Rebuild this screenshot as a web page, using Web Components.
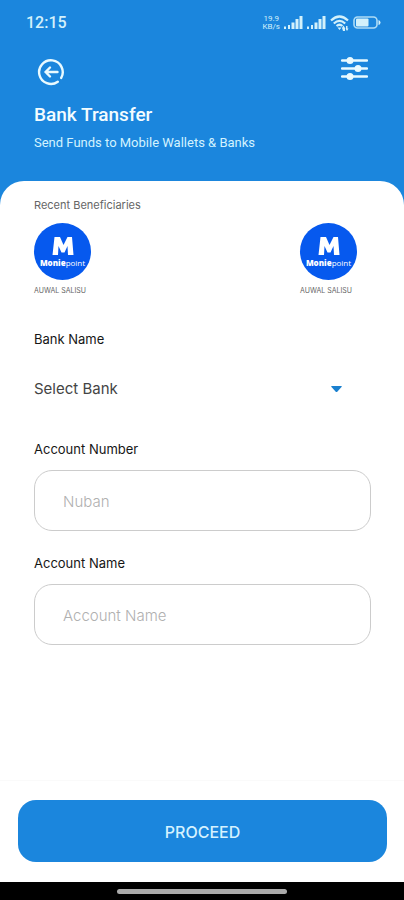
<!DOCTYPE html>
<html lang="en">
<head>
<meta charset="utf-8">
<meta name="viewport" content="width=device-width, initial-scale=1">
<title>Bank Transfer</title>
<style>
  html, body { margin: 0; height: 100%; }
  body { font-family: Inter, "Liberation Sans", sans-serif; background: #fff; }
</style>
</head>
<body>
<transfer-page>
  <status-bar slot="top" time="12:15"></status-bar>
  <page-header slot="top">
    <span slot="title">Bank Transfer</span>
    <span slot="subtitle">Send Funds to Mobile Wallets &amp; Banks</span>
  </page-header>
  <beneficiary-list>
    <span slot="heading">Recent Beneficiaries</span>
    <beneficiary-item>AUWAL SALISU</beneficiary-item>
    <beneficiary-item>AUWAL SALISU</beneficiary-item>
  </beneficiary-list>
  <bank-select label="Bank Name" placeholder="Select Bank"></bank-select>
  <text-field label="Account Number" placeholder="Nuban" mode="numeric"></text-field>
  <text-field label="Account Name" placeholder="Account Name" mode="text"></text-field>
  <action-bar slot="bottom">PROCEED</action-bar>
  <gesture-bar slot="bottom"></gesture-bar>
</transfer-page>

<script>
const define = (name, html, setup) => customElements.define(name, class extends HTMLElement {
  connectedCallback() {
    if (this.shadowRoot) return;
    this.attachShadow({ mode: 'open' }).innerHTML = html;
    if (setup) setup(this, this.shadowRoot);
  }
});

define('transfer-page', `
  <style>
    :host { display: flex; flex-direction: column; min-height: 100vh; background: #1b86dd; }
    main { flex: 1; box-sizing: border-box; background: #fff; border-radius: 24px 24px 0 0; padding: 16px 33px 24px 34px; }
  </style>
  <slot name="top"></slot>
  <main><slot></slot></main>
  <slot name="bottom"></slot>`);

define('status-bar', `
  <style>
    :host { display: flex; justify-content: space-between; align-items: center; height: 45px; padding: 0 23px 0 26px; color: #d3f1fb; font-family: Roboto, sans-serif; }
    .time { font-size: 16px; font-weight: 500; line-height: 20px; }
    .icons { display: flex; align-items: center; gap: 4px; }
    .rate { font-size: 8px; line-height: 8px; text-align: center; }
    svg { display: block; fill: currentColor; }
  </style>
  <span class="time"></span>
  <div class="icons">
    <div class="rate">19.9<br>KB/s</div>
    <svg width="19" height="13" viewBox="0 0 19 13"><path d="M0 10.500h2V13H0zM4 9h2v4H4zM7.500 6.500h3V13h-3zM11.500 3h3v10h-3zM15.500 0h3v13h-3z"/></svg>
    <svg width="19" height="13" viewBox="0 0 19 13"><path d="M0 10.500h2V13H0zM4 9h2v4H4zM7.500 6.500h3V13h-3zM11.500 3h3v10h-3zM15.500 0h3v13h-3z"/></svg>
    <svg width="19" height="16" viewBox="0 0 19 16"><g fill="none" stroke="currentColor" stroke-width="2.200"><path d="M1 5.500Q9.500-2.500 18 5.500"/><path d="M3.800 8.500Q9.500 3.200 15.200 8.500"/><path d="M6.500 11Q9.500 8.500 12.500 11"/></g><path d="M7.500 12.500 9.500 15l2-2.500zM12 13l1.500-2.500L15 13v3h-2zM16 11h1.500v2.500h1L17 16l-1.500-2.500h.500z"/></svg>
    <svg width="28" height="13" viewBox="0 0 28 13"><rect x="1" y="1" width="23" height="11" rx="3.500" fill="none" stroke="currentColor" stroke-width="1.600" opacity=".8"/><rect x="3" y="2.500" width="12.500" height="8" rx="1"/><path d="M25.500 4q2 .5 2 2.500t-2 2.500z"/></svg>
  </div>`,
  (host, root) => { root.querySelector('.time').textContent = host.getAttribute('time'); });

define('page-header', `
  <style>
    :host { display: block; padding: 11px 36px 29px 34px; color: #fff; font-family: Roboto, sans-serif; }
    nav { display: flex; justify-content: space-between; align-items: flex-start; }
    button { border: 0; padding: 0; background: none; color: #e9faff; cursor: pointer; }
    svg { display: block; }
    .back { padding: 2px 3px; }
    h1 { margin: 15px 0 0; font-size: 19px; line-height: 24px; font-weight: 500; color: #f3fcff; }
    p { margin: 7px 0 0; font-size: 13px; line-height: 18px; color: #d3f3ff; }
  </style>
  <nav>
    <button class="back" aria-label="Back"><svg width="28" height="28" viewBox="0 0 28 28" fill="none" stroke="currentColor" stroke-width="2.400" stroke-linecap="round" stroke-linejoin="round"><path d="M24.200 19.900A11.800 11.800 0 1 0 20.800 23.700"/><path d="M20.500 14H8.500m4.500-4.500L8.500 14l4.500 4.500"/></svg></button>
    <button aria-label="Filter"><svg width="27" height="26" viewBox="0 0 27 26" fill="currentColor"><path d="M1 4.500h25M1 12.500h25M1 20.500h25" stroke="currentColor" stroke-width="2.400" stroke-linecap="round"/><circle cx="9" cy="4.500" r="3.500"/><circle cx="17" cy="12.500" r="3.500"/><circle cx="9" cy="20.500" r="3.500"/></svg></button>
  </nav>
  <h1><slot name="title"></slot></h1>
  <p><slot name="subtitle"></slot></p>`);

define('beneficiary-list', `
  <style>
    :host { display: block; margin-bottom: 34px; }
    h2 { margin: 0 0 10px; font-size: 11px; line-height: 16px; font-weight: 400; color: #666; }
    .row { display: flex; justify-content: space-between; padding-right: 14px; }
  </style>
  <h2><slot name="heading"></slot></h2>
  <div class="row"><slot></slot></div>`);

define('beneficiary-item', `
  <style>
    :host { display: block; }
    button { display: flex; flex-direction: column; align-items: flex-start; gap: 6px; padding: 0; border: 0; background: none; cursor: pointer; font: 7px/10px Inter, sans-serif; color: #666; }
    .logo { display: flex; flex-direction: column; align-items: center; justify-content: center; box-sizing: border-box; width: 57px; height: 57px; padding-top: 2px; border-radius: 50%; background: #0659ee; color: #fff; }
    svg { display: block; }
    .brand { font: 800 8px/12px "Open Sans", sans-serif; margin-top: 2px; }
    .brand span { font-weight: 400; }
  </style>
  <button>
    <span class="logo">
      <svg width="22" height="18" viewBox="0 0 22 18" fill="currentColor" aria-hidden="true"><path d="M2.500 0H8l3.500 8L15.500 0H20l1.500 18H16l-.5-9-3 6.500h-3L6.500 9 6 18H.5z"/></svg>
      <span class="brand">Monie<span>point</span></span>
    </span>
    <slot></slot>
  </button>`);

define('bank-select', `
  <style>
    :host { display: block; margin-bottom: 23px; }
    label { display: block; font-size: 13px; line-height: 18px; font-weight: 400; color: #161616; }
    .box { display: grid; align-items: center; margin-top: 13px; }
    select, svg { grid-area: 1 / 1; }
    select { appearance: none; width: 100%; height: 56px; padding: 0; border: 0; background: none; font: 15px/20px Inter, sans-serif; color: #444; }
    svg { justify-self: end; margin-right: 29px; pointer-events: none; fill: #1a80cf; }
  </style>
  <label for="bank"></label>
  <div class="box">
    <select id="bank"><option></option></select>
    <svg width="11" height="6" viewBox="0 0 11 6"><path d="M.5 0h10q.5.500 0 1L6.500 5.500q-1 1-2 0L.5 1Q0 .500.500 0z"/></svg>
  </div>`,
  (host, root) => {
    root.querySelector('label').textContent = host.getAttribute('label');
    root.querySelector('option').textContent = host.getAttribute('placeholder');
  });

define('text-field', `
  <style>
    :host { display: block; margin-bottom: 23px; }
    label { display: block; font-size: 13px; line-height: 18px; font-weight: 400; color: #161616; }
    input { display: block; box-sizing: border-box; width: 100%; height: 61px; margin-top: 12px; padding: 2px 28px 0; border: 1px solid #ccc; border-radius: 18px; background: #fff; font: 15px/20px Inter, sans-serif; color: #222; outline-color: #1c87dd; }
    input::placeholder { color: #b0b0b0; opacity: 1; font-weight: 300; }
  </style>
  <label for="field"></label>
  <input id="field" type="text">`,
  (host, root) => {
    const input = root.querySelector('input');
    root.querySelector('label').textContent = host.getAttribute('label');
    input.placeholder = host.getAttribute('placeholder');
    input.inputMode = host.getAttribute('mode');
  });

define('action-bar', `
  <style>
    :host { display: block; padding: 19px 17px 20px 18px; border-top: 1px solid #fafafa; background: #fff; }
    button { display: block; width: 100%; height: 62px; padding: 2px 0 0; border: 0; border-radius: 18px; background: #1b86dd; color: #d5f2ff; font: 500 16px/20px Inter, sans-serif; cursor: pointer; }
  </style>
  <button><slot></slot></button>`);

define('gesture-bar', `
  <style>
    :host { display: flex; justify-content: center; align-items: center; height: 18px; background: #000; }
    span { width: 42%; height: 5px; border-radius: 3px; background: #aaa; }
  </style>
  <span></span>`);
</script>
</body>
</html>
